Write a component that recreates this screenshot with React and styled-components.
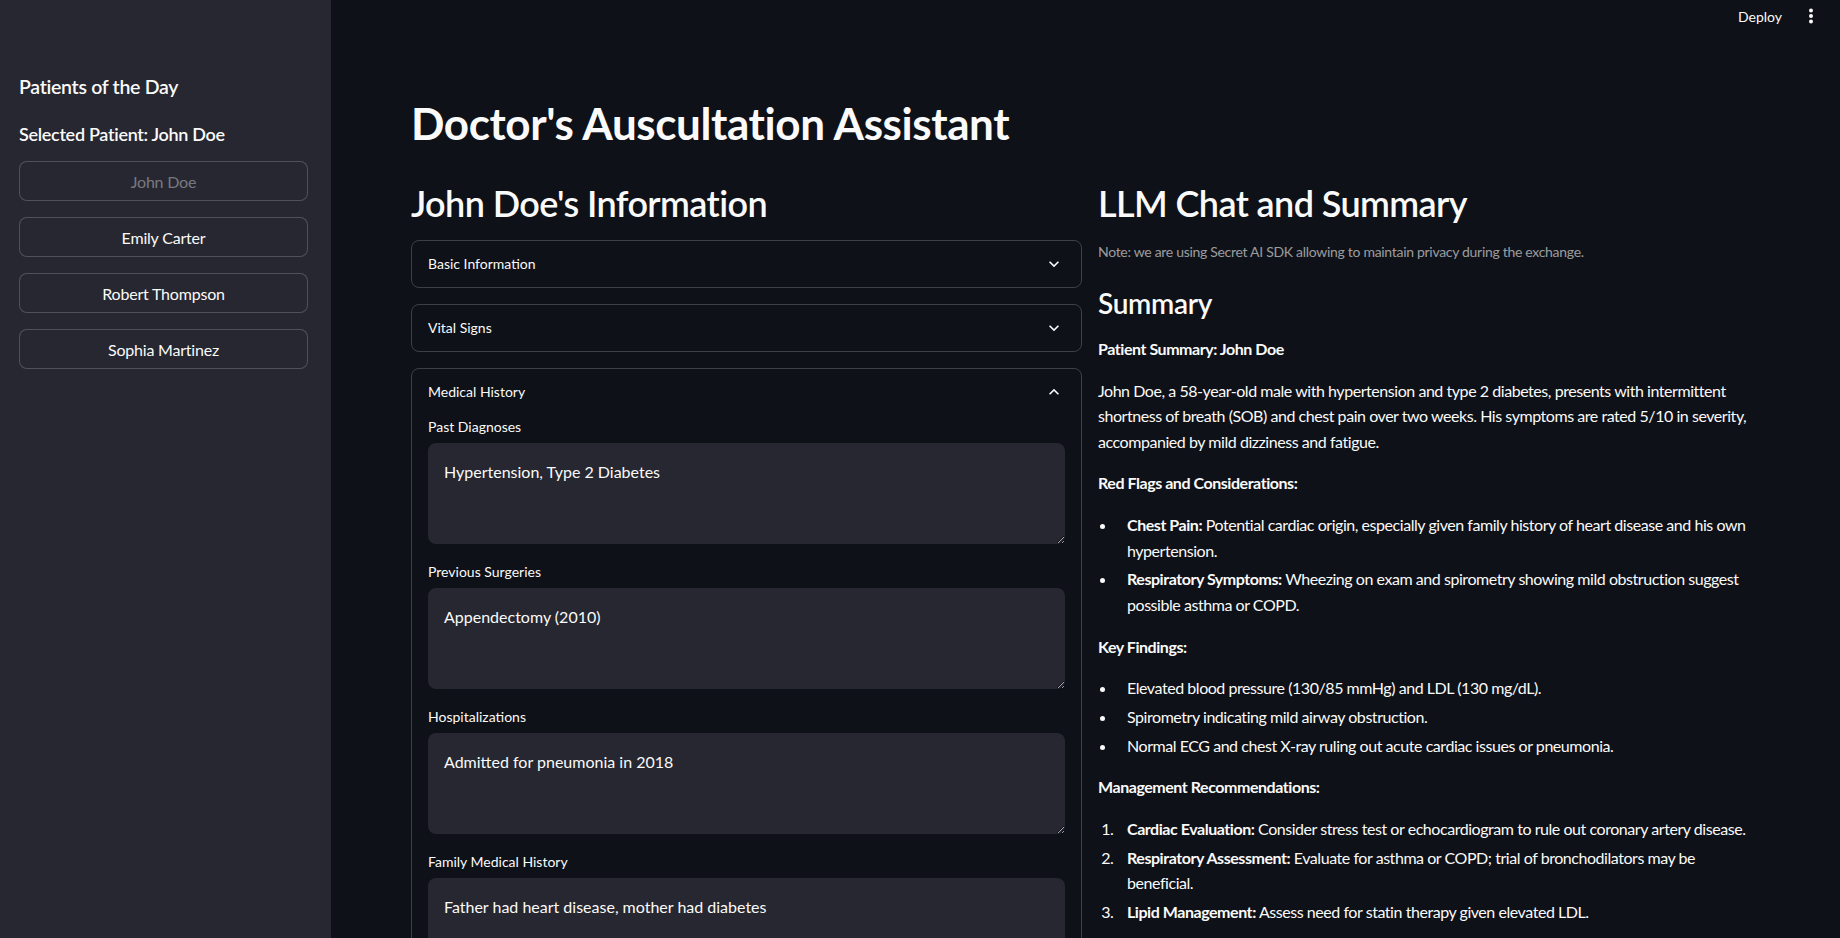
import React from 'react';
import styled, { createGlobalStyle } from 'styled-components';

const FONT = `'Lato', 'Liberation Sans', sans-serif`;
const TEXT = '#fafafa';
const BG = '#0e1117';
const PANEL = '#262730';
const LINE = 'rgba(250, 250, 250, 0.2)';

const GlobalStyle = createGlobalStyle`
  * { box-sizing: border-box; }
  html, body { margin: 0; padding: 0; background: ${BG}; }
  body { font-family: ${FONT}; color: ${TEXT}; }
  #root { height: 100vh; overflow: hidden; }
`;

const Shell = styled.div`
  display: flex;
  height: 100vh;
  overflow: hidden;
  background: ${BG};
`;

const Sidebar = styled.aside`
  width: 331px;
  flex: none;
  background: ${PANEL};
  padding: 75px 23px 0 19px;
  display: flex;
  flex-direction: column;
`;

const SideHeading = styled.h3`
  margin: 0 0 ${(p) => p.$gap}px;
  font-size: ${(p) => p.$size}px;
  font-weight: 600;
  line-height: 24px;
  letter-spacing: -0.3px;
`;

const PatientList = styled.div`
  display: flex;
  flex-direction: column;
  gap: 16px;
`;

const PatientButton = styled.button`
  height: 40px;
  width: 100%;
  background: ${PANEL};
  border: 1px solid ${LINE};
  border-radius: 8px;
  font-family: ${FONT};
  font-size: 16px;
  color: ${(p) => (p.disabled ? 'rgba(250, 250, 250, 0.4)' : TEXT)};
  letter-spacing: -0.2px;
  cursor: ${(p) => (p.disabled ? 'not-allowed' : 'pointer')};
`;

const Main = styled.main`
  position: relative;
  flex: 1;
  padding: 97px 80px 0 80px;
  overflow: hidden;
`;

const TopBar = styled.div`
  position: absolute;
  top: 0;
  right: 0;
  height: 32px;
  display: flex;
  align-items: center;
  gap: 26px;
  padding-right: 26px;
`;

const DeployLink = styled.span`
  font-size: 14px;
  color: ${TEXT};
`;

const Title = styled.h1`
  margin: 0;
  font-size: 44px;
  font-weight: 700;
  line-height: 1.2;
  letter-spacing: -0.4px;
`;

const Columns = styled.div`
  display: grid;
  grid-template-columns: 671px 1fr;
  gap: 16px;
  margin-top: 32px;
`;

const Column = styled.section`
  display: flex;
  flex-direction: column;
  min-width: 0;
`;

const SectionTitle = styled.h2`
  margin: 0 0 15px;
  font-size: 36px;
  font-weight: 600;
  line-height: 1.2;
  letter-spacing: -0.6px;
`;

const Expander = styled.div`
  border: 1px solid ${LINE};
  border-radius: 8px;
  margin-bottom: 16px;
`;

const ExpanderHead = styled.div`
  height: 46px;
  padding: 0 17px 0 16px;
  display: flex;
  align-items: center;
  justify-content: space-between;
  font-size: 14px;
`;

const ExpanderBody = styled.div`
  padding: 0 16px 16px;
  display: flex;
  flex-direction: column;
  gap: 16px;
`;

const Field = styled.label`
  display: flex;
  flex-direction: column;
`;

const FieldLabel = styled.span`
  min-height: 24px;
  display: flex;
  align-items: center;
  margin-bottom: 4px;
  font-size: 14px;
`;

const TextArea = styled.textarea`
  height: 101px;
  resize: vertical;
  background: ${PANEL};
  border: none;
  border-radius: 8px;
  padding: 16px;
  font-family: ${FONT};
  font-size: 16px;
  line-height: 1.6;
  color: ${TEXT};
  outline: none;
`;

const Note = styled.p`
  margin: 1px 0 0;
  font-size: 14px;
  line-height: 1.6;
  color: rgba(250, 250, 250, 0.6);
  letter-spacing: -0.3px;
`;

const SubTitle = styled.h3`
  margin: 24px 0 15px;
  font-size: 28px;
  font-weight: 600;
  line-height: 1.2;
  letter-spacing: -0.3px;
`;

const Markdown = styled.div`
  font-size: 16px;
  line-height: 1.6;
  letter-spacing: -0.45px;

  p {
    margin: 0 0 16px;
  }
  strong {
    font-weight: 700;
  }
  ul,
  ol {
    margin: 0 0 16px;
    padding-left: 0;
  }
  li {
    margin: 3.2px 0 3.2px 19px;
    padding-left: 10px;
  }
`;

const Chevron = ({ up }) => (
  <svg width="20" height="20" viewBox="0 0 24 24" fill={TEXT}>
    {up ? (
      <path d="M12 8l-6 6 1.41 1.41L12 10.83l4.59 4.58L18 14z" />
    ) : (
      <path d="M16.59 8.59L12 13.17 7.41 8.59 6 10l6 6 6-6z" />
    )}
  </svg>
);

const Kebab = () => (
  <svg width="6" height="16" viewBox="0 0 6 16" fill={TEXT}>
    <circle cx="3" cy="2.5" r="2" />
    <circle cx="3" cy="8" r="2" />
    <circle cx="3" cy="13.5" r="2" />
  </svg>
);

const patients = ['John Doe', 'Emily Carter', 'Robert Thompson', 'Sophia Martinez'];

const history = [
  ['Past Diagnoses', 'Hypertension, Type 2 Diabetes'],
  ['Previous Surgeries', 'Appendectomy (2010)'],
  ['Hospitalizations', 'Admitted for pneumonia in 2018'],
  ['Family Medical History', 'Father had heart disease, mother had diabetes'],
];

export default function App() {
  return (
    <Shell>
      <GlobalStyle />
      <Sidebar>
        <SideHeading $size={19.5} $gap={23}>Patients of the Day</SideHeading>
        <SideHeading $size={18} $gap={15}>Selected Patient: John Doe</SideHeading>
        <PatientList>
          {patients.map((name) => (
            <PatientButton key={name} disabled={name === 'John Doe'}>
              {name}
            </PatientButton>
          ))}
        </PatientList>
      </Sidebar>

      <Main>
        <TopBar>
          <DeployLink>Deploy</DeployLink>
          <Kebab />
        </TopBar>

        <Title>Doctor's Auscultation Assistant</Title>

        <Columns>
          <Column>
            <SectionTitle>John Doe's Information</SectionTitle>
            <Expander>
              <ExpanderHead>
                Basic Information
                <Chevron />
              </ExpanderHead>
            </Expander>
            <Expander>
              <ExpanderHead>
                Vital Signs
                <Chevron />
              </ExpanderHead>
            </Expander>
            <Expander>
              <ExpanderHead>
                Medical History
                <Chevron up />
              </ExpanderHead>
              <ExpanderBody>
                {history.map(([label, value]) => (
                  <Field key={label}>
                    <FieldLabel>{label}</FieldLabel>
                    <TextArea defaultValue={value} />
                  </Field>
                ))}
              </ExpanderBody>
            </Expander>
          </Column>

          <Column>
            <SectionTitle>LLM Chat and Summary</SectionTitle>
            <Note>
              Note: we are using Secret AI SDK allowing to maintain privacy during the exchange.
            </Note>
            <SubTitle>Summary</SubTitle>
            <Markdown>
              <p>
                <strong>Patient Summary: John Doe</strong>
              </p>
              <p>
                John Doe, a 58-year-old male with hypertension and type 2 diabetes, presents with
                intermittent shortness of breath (SOB) and chest pain over two weeks. His symptoms
                are rated 5/10 in severity, accompanied by mild dizziness and fatigue.
              </p>
              <p>
                <strong>Red Flags and Considerations:</strong>
              </p>
              <ul>
                <li>
                  <strong>Chest Pain:</strong> Potential cardiac origin, especially given family
                  history of heart disease and his own hypertension.
                </li>
                <li>
                  <strong>Respiratory Symptoms:</strong> Wheezing on exam and spirometry showing
                  mild obstruction suggest possible asthma or COPD.
                </li>
              </ul>
              <p>
                <strong>Key Findings:</strong>
              </p>
              <ul>
                <li>Elevated blood pressure (130/85 mmHg) and LDL (130 mg/dL).</li>
                <li>Spirometry indicating mild airway obstruction.</li>
                <li>Normal ECG and chest X-ray ruling out acute cardiac issues or pneumonia.</li>
              </ul>
              <p>
                <strong>Management Recommendations:</strong>
              </p>
              <ol>
                <li>
                  <strong>Cardiac Evaluation:</strong> Consider stress test or echocardiogram to
                  rule out coronary artery disease.
                </li>
                <li>
                  <strong>Respiratory Assessment:</strong> Evaluate for asthma or COPD; trial of
                  bronchodilators may be beneficial.
                </li>
                <li>
                  <strong>Lipid Management:</strong> Assess need for statin therapy given elevated
                  LDL.
                </li>
              </ol>
            </Markdown>
          </Column>
        </Columns>
      </Main>
    </Shell>
  );
}
